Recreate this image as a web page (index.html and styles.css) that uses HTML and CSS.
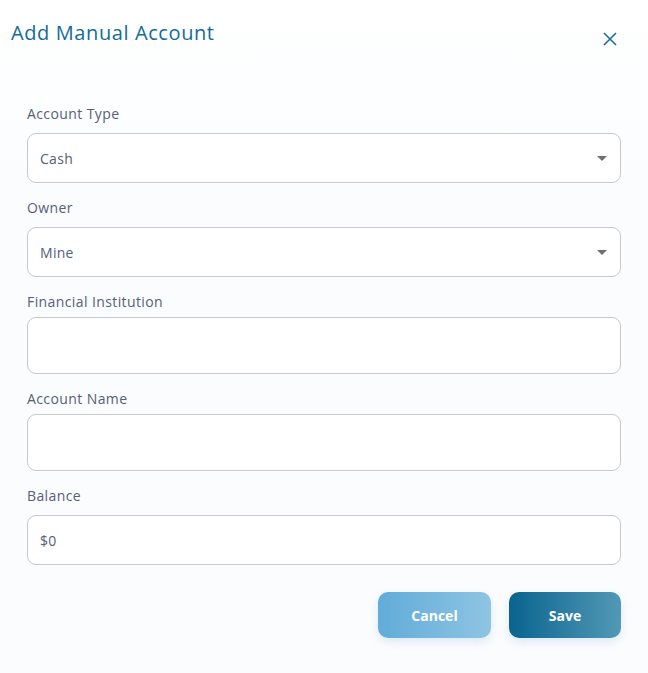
FILE: index.html
```html
<!DOCTYPE html>
<html lang="en">
<head>
<meta charset="utf-8">
<title>Add Manual Account</title>
<link rel="stylesheet" href="styles.css">
</head>
<body>
<div class="dialog">
  <header class="dialog-header">
    <h1 class="dialog-title">Add Manual Account</h1>
    <button class="close-btn" type="button" aria-label="Close">
      <svg width="14" height="14" viewBox="0 0 14 14"><path d="M1 1 L13 13 M13 1 L1 13" stroke="#1b6f9c" stroke-width="1.6" fill="none"/></svg>
    </button>
  </header>
  <form class="dialog-body">
    <div class="field field-select">
      <label class="field-label">Account Type</label>
      <div class="control control-select">
        <span class="control-value">Cash</span>
        <svg class="caret" width="10" height="5" viewBox="0 0 10 5"><path d="M0 0 L10 0 L5 5 Z" fill="#707070"/></svg>
      </div>
    </div>
    <div class="field field-select">
      <label class="field-label">Owner</label>
      <div class="control control-select">
        <span class="control-value">Mine</span>
        <svg class="caret" width="10" height="5" viewBox="0 0 10 5"><path d="M0 0 L10 0 L5 5 Z" fill="#707070"/></svg>
      </div>
    </div>
    <div class="field field-text">
      <label class="field-label">Financial Institution</label>
      <div class="control control-text"></div>
    </div>
    <div class="field field-text">
      <label class="field-label">Account Name</label>
      <div class="control control-text"></div>
    </div>
    <div class="field field-select">
      <label class="field-label">Balance</label>
      <div class="control control-select">
        <span class="control-value">$0</span>
      </div>
    </div>
    <div class="actions">
      <button type="button" class="btn btn-cancel">Cancel</button>
      <button type="button" class="btn btn-save">Save</button>
    </div>
  </form>
</div>
</body>
</html>
```
FILE: styles.css
```css
* { box-sizing: border-box; }
html, body {
  margin: 0;
  padding: 0;
  background: #fbfcfe;
  font-family: "Open Sans", "Noto Sans", sans-serif;
}
.dialog {
  width: 648px;
  height: 673px;
  background: linear-gradient(180deg, #ffffff 0px, #fdfeff 80px, #fbfcfe 200px);
}
.dialog-header {
  height: 80px;
  display: flex;
  align-items: flex-start;
  justify-content: space-between;
  padding: 19px 30px 0 11px;
}
.dialog-title {
  margin: 0;
  font-size: 20px;
  font-weight: 500;
  line-height: 28px;
  color: #126c99;
  letter-spacing: 0.6px;
}
.close-btn {
  margin-top: 12px;
  width: 16px;
  height: 16px;
  padding: 0;
  border: none;
  background: transparent;
  display: flex;
  align-items: center;
  justify-content: center;
}
.dialog-body {
  padding: 24px 27px 0 27px;
  display: flex;
  flex-direction: column;
  gap: 15px;
}
.field {
  display: flex;
  flex-direction: column;
}
.field-select { gap: 9px; }
.field-text { gap: 5px; }
.field-label {
  font-size: 14px;
  line-height: 20px;
  color: #556076;
  letter-spacing: 0.4px;
}
.control {
  background: #ffffff;
  border: 1px solid #c7c9cc;
  border-radius: 9px;
  display: flex;
  align-items: center;
  padding: 0 12px;
}
.control-select { height: 50px; }
.control-text { height: 57px; }
.control-value {
  flex: 1;
  font-size: 14px;
  color: #556076;
  letter-spacing: 0.3px;
}
.caret { margin-right: 1px; }
.actions {
  display: flex;
  justify-content: flex-end;
  gap: 18px;
  margin-top: 12px;
}
.btn {
  height: 46px;
  border: none;
  border-radius: 10px;
  color: #ffffff;
  font-family: "Open Sans", "Noto Sans", sans-serif;
  font-weight: 700;
  font-size: 14px;
  box-shadow: 0 4px 10px rgba(120, 170, 210, 0.22);
}
.btn-cancel {
  width: 113px;
  background: linear-gradient(90deg, #62acd9, #8ec4e3);
}
.btn-save {
  width: 112px;
  background: linear-gradient(90deg, #09648f, #5298b5);
}
```
